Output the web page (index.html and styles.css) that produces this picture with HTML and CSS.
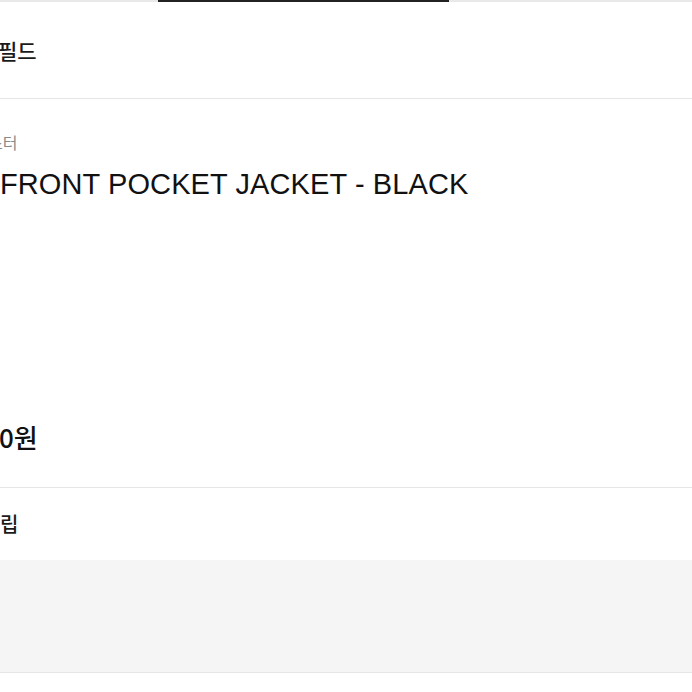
FILE: index.html
```html
<!DOCTYPE html>
<html lang="ko">
<head>
<meta charset="utf-8">
<link rel="stylesheet" href="styles.css">
</head>
<body>
<div class="tabbar"><span class="tab-indicator"></span></div>
<header class="header"><h1 class="title">필드</h1></header>
<section class="info">
  <p class="brand">스터</p>
  <h2 class="name">FRONT POCKET JACKET - BLACK</h2>
  <p class="price">0원</p>
</section>
<div class="row"><span class="row-label">립</span></div>
<div class="gap"></div>
</body>
</html>
```
FILE: styles.css
```css
html, body {
  margin: 0;
  padding: 0;
  background: #ffffff;
  overflow: hidden;
}
body {
  font-family: "Liberation Sans", "Noto Sans CJK KR", sans-serif;
  color: #111111;
  width: 692px;
  height: 692px;
}
.tabbar {
  height: 2px;
  background: #e9e9e9;
  display: flex;
}
.tab-indicator {
  display: block;
  margin-left: 158px;
  width: 291px;
  height: 2px;
  background: #222222;
}
.header {
  height: 96px;
  display: flex;
  align-items: center;
  border-bottom: 1px solid #e6e6e6;
}
.title {
  margin: 0 0 0 -2px;
  font-family: "Noto Sans CJK KR", sans-serif;
  font-size: 21px;
  font-weight: 500;
  line-height: 28px;
  color: #1a1a1a;
}
.info {
  box-sizing: border-box;
  height: 389px;
  display: flex;
  flex-direction: column;
  padding: 33px 0 33px 0;
  border-bottom: 1px solid #e6e6e6;
}
.brand {
  margin: 0 0 0 -12px;
  font-family: "Noto Sans CJK KR", sans-serif;
  font-size: 16px;
  line-height: 20px;
  color: #8a8a8a;
}
.name {
  margin: 14px 0 0 0;
  font-size: 29px;
  font-weight: 400;
  line-height: 36px;
  letter-spacing: 0.1px;
  color: #111111;
}
.price {
  margin: auto 0 0 -1px;
  font-family: "Noto Sans CJK KR", sans-serif;
  font-size: 26px;
  font-weight: 500;
  line-height: 34px;
  color: #111111;
}
.row {
  height: 72px;
  display: flex;
  align-items: center;
}
.row-label {
  font-family: "Noto Sans CJK KR", sans-serif;
  font-size: 20px;
  font-weight: 500;
  line-height: 26px;
  color: #1a1a1a;
}
.gap {
  height: 112px;
  background: #f5f5f5;
  border-bottom: 1px solid #e6e6e6;
}
```
